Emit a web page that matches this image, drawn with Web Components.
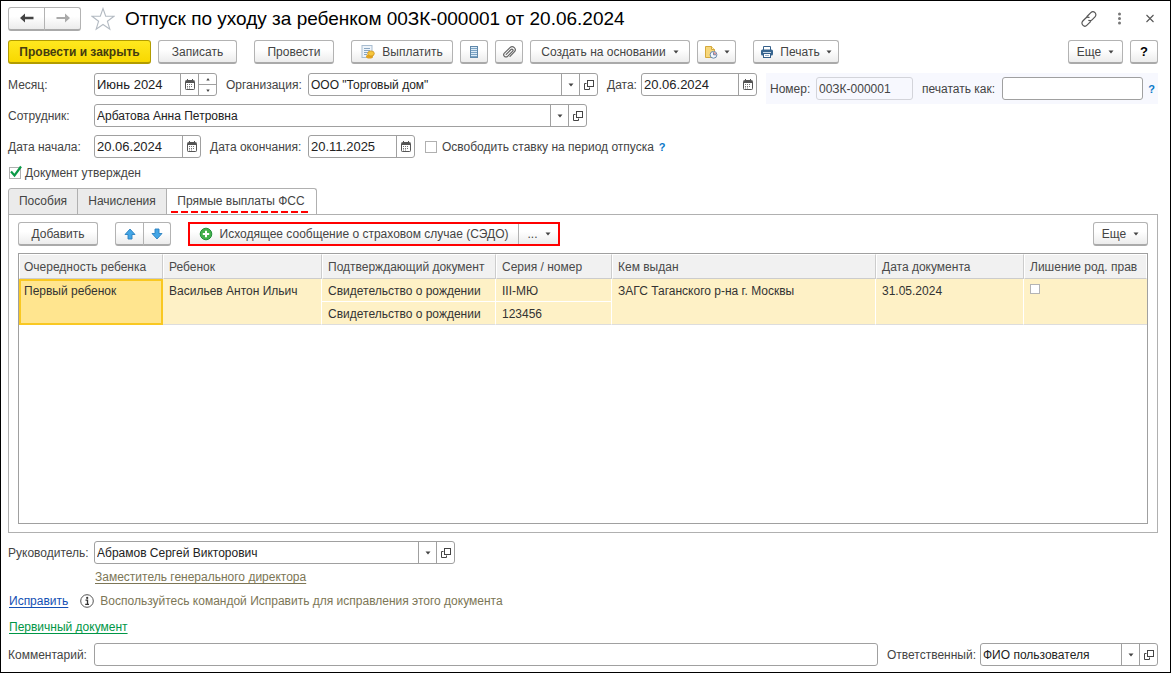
<!DOCTYPE html>
<html lang="ru">
<head>
<meta charset="utf-8">
<title>Отпуск по уходу за ребенком</title>
<style>
html, body { height: 100%; }
body { margin: 0; background: #fff; color: #444; font: 12px/16px "Liberation Sans", Arial, sans-serif; }
</style>
</head>
<body>
<leave-form></leave-form>

<template id="leave-form">
<style>
:host { display: flex; flex-direction: column; box-sizing: border-box; min-height: 100%; border: 1px solid #000; padding: 5px 12px 6px 7px; }
header { display: flex; align-items: center; height: 25px; margin-bottom: 9px; }
h1 { flex: 1; margin: 0 0 0 10px; font-size: 19px; line-height: 24px; font-weight: 400; color: #000; }
.star { margin-left: 10px; }
.tools { display: flex; gap: 12px; }
.bar { display: flex; align-items: center; gap: 7px; }
.gap { margin-left: 10px; }
.end { margin-left: auto; }
.fields { display: flex; gap: 9px; margin-top: 9px; }
.left { flex: 1; min-width: 0; display: flex; flex-direction: column; gap: 8px; }
.row { display: flex; align-items: center; gap: 9px; }
.number { flex: 0 0 392px; min-width: 0; align-self: flex-start; box-sizing: border-box; display: flex; align-items: center; gap: 9px; height: 31px; padding: 0 3px 0 4px; background: #f7f8fe; }
ui-field { --label: 86px; }
.month { flex: 0 0 209px; }
.org { flex: 1; --label: 82px; }
.date { flex: 0 0 150px; --label: 34px; }
.no { flex: 0 0 143px; --label: 46px; }
.print { flex: 1; --label: 80px; }
.person { flex: 0 1 579px; }
.from { flex: 0 0 193px; }
.to { flex: 0 0 205px; --label: 98px; margin-right: 1px; }
.dates { margin-top: 8px; }
.approved { margin: 6px 0; }
ui-tabs { flex: 1; }
.panel-bar { margin-bottom: 7px; }
.split { outline: 2px solid #f00; outline-offset: -2px; }
ui-grid { flex: 1; }
.manager { flex: 0 1 447px; }
.footer { margin-top: 8px; }
.post { margin: 5px 0 8px 87px; }
.fix { height: 16px; gap: 12px; }
.hint { display: flex; align-items: center; gap: 6px; color: #7c7656; }
.source { margin: 10px 0 8px 1px; }
.fix ui-link { margin-left: 1px; }
.comment { flex: 1; }
.owner { flex: 0 0 271px; --label: 93px; }
</style>
<header>
  <button-group>
    <ui-button icon="back" title="Назад"></ui-button>
    <ui-button icon="forward" title="Вперед"></ui-button>
  </button-group>
  <ui-button plain icon="star" title="В избранное" class="star"></ui-button>
  <h1>Отпуск по уходу за ребенком 00ЗК-000001 от 20.06.2024</h1>
  <div class="tools">
    <ui-button plain icon="link" title="Получить ссылку"></ui-button>
    <ui-button plain icon="dots" title="Дополнительно"></ui-button>
    <ui-button plain icon="close" title="Закрыть"></ui-button>
  </div>
</header>
<div class="bar">
  <ui-button primary w="143">Провести и закрыть</ui-button>
  <ui-button w="79">Записать</ui-button>
  <ui-button w="80" class="gap">Провести</ui-button>
  <ui-button w="102" class="gap" icon="pay">Выплатить</ui-button>
  <ui-button w="28" icon="list" title="Движения документа"></ui-button>
  <ui-button w="28" icon="clip" title="Присоединенные файлы"></ui-button>
  <ui-button w="160" menu>Создать на основании</ui-button>
  <ui-button w="39" icon="report" menu title="Отчеты"></ui-button>
  <ui-button w="86" class="gap" icon="print" menu>Печать</ui-button>
  <ui-button w="55" class="end" menu>Еще</ui-button>
  <ui-button w="28" icon="question" title="Справка"></ui-button>
</div>
<div class="fields">
  <div class="left">
    <div class="row">
      <ui-field class="month" label="Месяц:" value="Июнь 2024" parts="cal spin"></ui-field>
      <ui-field class="org" label="Организация:" value='ООО "Торговый дом"' parts="drop open"></ui-field>
      <ui-field class="date" label="Дата:" value="20.06.2024" parts="cal"></ui-field>
    </div>
    <div class="row"><ui-field class="person" label="Сотрудник:" value="Арбатова Анна Петровна" parts="drop open"></ui-field></div>
  </div>
  <div class="number">
    <ui-field class="no" label="Номер:" value="00ЗК-000001" locked></ui-field>
    <ui-field class="print" label="печатать как:" value=""></ui-field>
    <ui-help></ui-help>
  </div>
</div>
<div class="row dates">
  <ui-field class="from" label="Дата начала:" value="20.06.2024" parts="cal"></ui-field>
  <ui-field class="to" label="Дата окончания:" value="20.11.2025" parts="cal"></ui-field>
  <ui-check>Освободить ставку на период отпуска</ui-check>
  <ui-help></ui-help>
</div>
<ui-check class="approved" checked>Документ утвержден</ui-check>
<ui-tabs>
  <div class="bar panel-bar">
    <ui-button w="80">Добавить</ui-button>
    <button-group class="gap">
      <ui-button w="29" icon="up" title="Переместить вверх"></ui-button>
      <ui-button w="28" icon="down" title="Переместить вниз"></ui-button>
    </button-group>
    <button-group class="gap split">
      <ui-button w="331" icon="plus">Исходящее сообщение о страховом случае (СЭДО)</ui-button>
      <ui-button w="42" menu>...</ui-button>
    </button-group>
    <ui-button w="55" class="end" menu>Еще</ui-button>
  </div>
  <ui-grid></ui-grid>
</ui-tabs>
<div class="row footer"><ui-field class="manager" label="Руководитель:" value="Абрамов Сергей Викторович" parts="drop open"></ui-field></div>
<ui-link class="post" tone="olive">Заместитель генерального директора</ui-link>
<div class="row fix">
  <ui-link tone="blue">Исправить</ui-link>
  <div class="hint"><ui-icon name="info"></ui-icon><span>Воспользуйтесь командой Исправить для исправления этого документа</span></div>
</div>
<ui-link class="source" tone="green">Первичный документ</ui-link>
<div class="row">
  <ui-field class="comment" label="Комментарий:" value=""></ui-field>
  <ui-field class="owner" label="Ответственный:" value="ФИО пользователя" parts="drop open"></ui-field>
</div>
</template>

<template id="ui-tabs">
<style>
:host { display: flex; flex-direction: column; }
nav { display: flex; height: 27px; margin-bottom: -1px; }
button { box-sizing: border-box; margin: 0 -1px 0 0; padding: 0 0 2px; border: 1px solid #b0b0b0; background: #ebebeb; color: #444; font: inherit; }
button:first-child { width: 70px; border-radius: 3px 0 0 0; }
button:nth-child(2) { width: 90px; }
button:last-child { width: 151px; border-radius: 0 3px 0 0; border-bottom-color: #fff; background: #fff; }
button:last-child span { display: block; margin: 2px 5px 0 4px; padding-bottom: 2px; background: repeating-linear-gradient(90deg, #f00 0 7px, transparent 7px 10px) left bottom / 100% 2px no-repeat; line-height: 20px; }
section { flex: 1; display: flex; flex-direction: column; padding: 7px 9px 8px; border: 1px solid #b0b0b0; }
</style>
<nav role="tablist">
  <button role="tab" type="button">Пособия</button>
  <button role="tab" type="button">Начисления</button>
  <button role="tab" type="button" aria-selected="true"><span>Прямые выплаты ФСС</span></button>
</nav>
<section role="tabpanel"><slot></slot></section>
</template>

<template id="ui-grid">
<style>
:host { display: block; border: 1px solid #a0a0a0; }
table { width: 100%; table-layout: fixed; border-collapse: separate; border-spacing: 0; color: #333; }
th, td { box-sizing: border-box; padding: 0 0 0 5px; text-align: left; vertical-align: top; font-weight: 400; white-space: nowrap; overflow: hidden; }
th { height: 25px; vertical-align: middle; color: #4a4a4a; background: #f1f1f1; border: 1px solid #fff; border-right-color: #ccc; border-bottom-color: #ccc; }
th:last-child { border-right-color: #fff; }
td { height: 23px; padding: 2px 0 0 6px; line-height: 20px; background: #fef1c6; border-right: 1px solid #fff; border-bottom: 1px solid #fff; }
td[rowspan], tr + tr td { border-bottom-color: #ddd; }
td:last-child { border-right: 0; }
tr + tr td:last-child { border-right: 1px solid #fff; }
td.active { background: #ffe58f; border: 2px solid #f9c822; padding: 0 0 0 3px; }
th:first-child { padding-left: 4px; }
.c1 { width: 144px; } .c2 { width: 159px; } .c3 { width: 174px; } .c4 { width: 116px; } .c6 { width: 148px; } .c7 { width: 123px; }
input { appearance: none; display: block; box-sizing: border-box; width: 10px; height: 10px; margin: 3px 0 0; border: 1px solid #b4b4b4; background: #fff; }
</style>
<table>
  <colgroup><col class="c1"><col class="c2"><col class="c3"><col class="c4"><col><col class="c6"><col class="c7"></colgroup>
  <thead><tr><th>Очередность ребенка</th><th>Ребенок</th><th>Подтверждающий документ</th><th>Серия / номер</th><th>Кем выдан</th><th>Дата документа</th><th>Лишение род. прав</th></tr></thead>
  <tbody>
    <tr><td rowspan="2" class="active">Первый ребенок</td><td rowspan="2">Васильев Антон Ильич</td><td>Свидетельство о рождении</td><td>III-МЮ</td><td rowspan="2">ЗАГС Таганского р-на г. Москвы</td><td rowspan="2">31.05.2024</td><td rowspan="2"><input type="checkbox" aria-label="Лишение род. прав"></td></tr>
    <tr><td>Свидетельство о рождении</td><td>123456</td></tr>
  </tbody>
</table>
</template>

<script>
const ICONS = {
  back: [16, 12, '<path d="M1 6 6 1.5V4.800h8.500v2.400H6v3.300z" fill="#444"/>'],
  forward: [16, 12, '<path d="M15 6 10 1.500V5H1.500v2H10v3.500z" fill="#aaa"/>'],
  star: [24, 24, '<path d="M12 1.500l2.700 7.700 8.300.1-6.600 4.900 2.400 8-6.800-4.700-6.800 4.700 2.400-8L1 9.300l8.300-.1z" fill="#fff" stroke="#b3bac2" stroke-width="1.100"/>'],
  link: [18, 18, '<g fill="none" stroke="#555" stroke-width="1.200" stroke-linecap="round"><path d="M7 6.500 10.800 2.600a2.900 2.900 0 0 1 4.200 4.200L12 9.800a2.800 2.800 0 0 1-3.200.6"/><path d="M10.600 11.600 7 15.200a2.900 2.900 0 0 1-4.200-4.200L5.800 8a2.800 2.800 0 0 1 3.200-.6"/></g>'],
  dots: [18, 18, '<g fill="#777"><circle cx="9.500" cy="4" r="1.500"/><circle cx="9.500" cy="8.500" r="1.500"/><circle cx="9.500" cy="13" r="1.500"/></g>'],
  close: [18, 18, '<path d="M6.500 5l7 7M13.500 5l-7 7" stroke="#555" stroke-width="1.100"/>'],
  pay: [14, 14, '<rect x="1" y=".5" width="10" height="12" fill="#eef4fa" stroke="#a9bdd0"/><path d="M3 3.500h6M3 5.500h6M3 7.500h4M3 9.500h3" stroke="#8aa7c2"/><ellipse cx="8.500" cy="11.500" rx="3.500" ry="2" fill="#e3a320"/><ellipse cx="10" cy="8.500" rx="3.300" ry="2.600" fill="#f6c63c" stroke="#cf9420" stroke-width=".8"/>'],
  list: [10, 12, '<rect x="1.500" y=".5" width="7" height="11" fill="#dcebf7" stroke="#5f88ab"/><path d="M2 2.500h6M2 4.500h6M2 6.500h6M2 8.500h6M2 10.500h6" stroke="#7ba3c4"/>'],
  clip: [14, 14, '<path d="M4.200 9.400 9 4.500a1.200 1.200 0 0 1 1.700 1.700L5.600 11.300a2.200 2.200 0 0 1-3.200-3.200L8 2.600a3 3 0 0 1 4.300 4.300L8 11.400" fill="none" stroke="#666" stroke-width="1.200" stroke-linecap="round"/>'],
  report: [14, 14, '<path d="M1.500 1.500h6l3 3v8h-9z" fill="#f7d77b" stroke="#d5a93c"/><path d="M7.500 1.500v3h3" fill="#fff0b8" stroke="#d5a93c"/><circle cx="9.500" cy="9.800" r="3.400" fill="#f4f8fc" stroke="#6889ad"/><path d="M9.500 9.800V6.900a3 3 0 0 1 2.900 2.900z" fill="#e59a9a"/><path d="M9.500 7.300v2.500h2.500" fill="none" stroke="#5878a0" stroke-width=".8"/>'],
  print: [14, 14, '<path d="M3.500 5V1.500h7V5" fill="#fff" stroke="#36608a"/><rect x="1" y="4.500" width="12" height="6" rx="1.500" fill="#386690"/><path d="M3 7.500h8" stroke="#c9d9e8"/><rect x="3.500" y="8.500" width="7" height="4" fill="#fff" stroke="#36608a"/><path d="M5 10.500h4" stroke="#9bb1c6"/>'],
  up: [12, 12, '<path d="M6 1 11 6.500H8V11H4V6.500H1z" fill="#44a6e6" stroke="#2a80c0" stroke-width=".9" stroke-linejoin="round"/>'],
  down: [12, 12, '<path d="M6 11 1 5.500H4V1h4v4.500h3z" fill="#44a6e6" stroke="#2a80c0" stroke-width=".9" stroke-linejoin="round"/>'],
  plus: [14, 14, '<circle cx="7" cy="7" r="5.800" fill="#43b14b" stroke="#24903a"/><path d="M7 3.800v6.400M3.800 7h6.400" stroke="#fff" stroke-width="2"/>'],
  cal: [10, 11, '<path d="M2.500 0v2M7.500 0v2" stroke="#555"/><rect x=".5" y="1.500" width="9" height="9" rx=".8" fill="#fff" stroke="#555"/><path d="M1 3h8" stroke="#555" stroke-width="2"/><path d="M2 5.500h6M2 7.500h6M2 9h4" stroke="#777" stroke-dasharray="1 1"/>'],
  drop: [6, 4, '<path d="M.5.500h5L3 3.500z" fill="#444"/>'],
  open: [10, 10, '<rect x="3.500" y=".5" width="6" height="6" fill="none" stroke="#444"/><path d="M2.500 3.500h-2v6h5V7.500" fill="none" stroke="#444"/>'],
  spinUp: [4, 3, '<path d="M2 0 3.700 2.500H.3z" fill="#444"/>'],
  spinDown: [4, 3, '<path d="M2 3 3.700.5H.3z" fill="#444"/>'],
  info: [14, 14, '<circle cx="7" cy="7" r="6.300" fill="#fff" stroke="#555"/><circle cx="7.200" cy="3.900" r="1.100" fill="#333"/><path d="M5.500 6.200h2v4M5.200 10.400h3.800" fill="none" stroke="#333" stroke-width="1.300"/>'],
  question: null
};

class Base extends HTMLElement {
  connectedCallback() {
    if (this.shadowRoot) return;
    this.attachShadow({ mode: 'open' });
    this.render(this.shadowRoot);
  }
  attr(name) { return this.getAttribute(name) || ''; }
}

const fromTemplate = id => class extends Base {
  render(root) { root.append(document.getElementById(id).content.cloneNode(true)); }
};

customElements.define('ui-icon', class extends Base {
  render(root) {
    const [w, h, body] = ICONS[this.attr('name')];
    root.innerHTML = `<style>:host{display:block;flex:none}svg{display:block}</style><svg width="${w}" height="${h}" viewBox="0 0 ${w} ${h}" aria-hidden="true">${body}</svg>`;
  }
});

customElements.define('ui-button', class extends Base {
  render(root) {
    const icon = this.attr('icon');
    const title = this.attr('title');
    const glyph = icon === 'question' ? '<b>?</b>' : icon ? `<ui-icon name="${icon}"></ui-icon>` : '';
    const text = this.textContent.trim() ? '<span><slot></slot></span>' : '';
    root.innerHTML = `<style>
      :host { display: block; flex: none; width: ${this.attr('w') || 37}px; }
      :host([plain]) { width: auto; }
      button { box-sizing: border-box; display: flex; align-items: center; justify-content: center; gap: 7px; width: 100%; height: 24px; margin: 0; padding: 0; border: 1px solid #b3b3b3; border-bottom: 2px solid #aaa; border-radius: var(--radius, 3px); background: linear-gradient(#fff 40%, #ececec); color: #444; font: inherit; white-space: nowrap; }
      :host([primary]) button { border-color: #b29c00; background: linear-gradient(#ffe81f, #f8d800); font-weight: 700; color: #443c10; }
      :host([plain]) button { border: 0; background: none; }
      :host([icon][menu]) button { gap: 6px; }
      b { color: #000; font-size: 13px; }
    </style><button type="button"${title ? ` aria-label="${title}"` : ''}>${glyph}${text}${this.hasAttribute('menu') ? '<ui-icon name="drop"></ui-icon>' : ''}</button>`;
  }
});

customElements.define('button-group', class extends Base {
  render(root) {
    root.innerHTML = `<style>
      :host { display: flex; flex: none; }
      ::slotted(:first-child) { --radius: 3px 0 0 3px; }
      ::slotted(:last-child) { --radius: 0 3px 3px 0; }
      ::slotted(:not(:first-child)) { margin-left: -1px; }
    </style><slot></slot>`;
  }
});

customElements.define('ui-field', class extends Base {
  render(root) {
    const names = { cal: 'Выбрать дату', drop: 'Выбрать из списка', open: 'Открыть' };
    const parts = this.attr('parts').split(' ').filter(Boolean).map(p => p === 'spin'
      ? '<div class="spin"><button type="button" aria-label="Больше"><ui-icon name="spinUp"></ui-icon></button><button type="button" aria-label="Меньше"><ui-icon name="spinDown"></ui-icon></button></div>'
      : `<button type="button" aria-label="${names[p]}"><ui-icon name="${p}"></ui-icon></button>`).join('');
    root.innerHTML = `<style>
      :host { display: flex; align-items: center; min-width: 0; }
      label { flex: 0 0 var(--label); white-space: nowrap; }
      .box { box-sizing: border-box; flex: 1; display: flex; min-width: 0; height: 23px; border: 1px solid #a0a0a0; border-radius: 3px; background: #fff; overflow: hidden; }
      input { flex: 1; min-width: 0; margin: 0; padding: 0 2px; border: 0; outline: 0; background: none; color: #222; font: inherit; }
      :host([parts^="cal"]) input { font-size: 13px; }
      button { box-sizing: border-box; display: flex; align-items: center; justify-content: center; flex: 0 0 18px; margin: 0; padding: 0; border: 0; border-left: 1px solid #a0a0a0; background: none; }
      .spin { flex: 0 0 18px; display: flex; flex-direction: column; }
      .spin button { flex: 1; }
      .spin button + button { border-top: 1px solid #a0a0a0; }
      :host([locked]) .box { border-color: #d3d4da; background: #f7f8fe; }
      :host([locked]) input { color: #444; }
    </style><label for="f">${this.attr('label')}</label><div class="box"><input id="f" type="text"${this.hasAttribute('locked') ? ' readonly' : ''}>${parts}</div>`;
    const input = root.querySelector('input');
    input.value = this.attr('value');
  }
});

customElements.define('ui-check', class extends Base {
  render(root) {
    const on = this.hasAttribute('checked');
    root.innerHTML = `<style>
      :host { display: flex; height: 18px; }
      label { display: flex; align-items: center; gap: ${on ? 4 : 5}px; margin-left: ${on ? 1 : 0}px; }
      .mark { position: relative; }
      input { appearance: none; display: block; box-sizing: border-box; width: 12px; height: 12px; margin: 0; border: 1px solid #b0b0b0; background: #fff; }
      svg { position: absolute; left: 0; top: -2px; pointer-events: none; display: none; }
      input:checked + svg { display: block; }
    </style><label><span class="mark"><input type="checkbox"${on ? ' checked' : ''}><svg width="14" height="14" viewBox="0 0 14 14"><path d="M2 6.500l3.500 4L12 1.500" fill="none" stroke="#0b9a47" stroke-width="2.200"/></svg></span><span><slot></slot></span></label>`;
  }
});

customElements.define('ui-help', class extends Base {
  render(root) {
    root.innerHTML = `<style>:host{display:block;margin-left:-4px}button{margin:0;padding:0;border:0;background:none;font:inherit;font-size:11px;font-weight:700;color:#0a78c8}</style><button type="button">?</button>`;
  }
});

customElements.define('ui-link', class extends Base {
  render(root) {
    const tone = { blue: '#1450b4', green: '#009646', olive: '#7c7656' }[this.attr('tone')];
    root.innerHTML = `<style>:host{display:block}a{color:${tone};text-underline-offset:2px}</style><a href="#"><slot></slot></a>`;
  }
});

customElements.define('ui-tabs', fromTemplate('ui-tabs'));
customElements.define('ui-grid', fromTemplate('ui-grid'));
customElements.define('leave-form', fromTemplate('leave-form'));
</script>
</body>
</html>
